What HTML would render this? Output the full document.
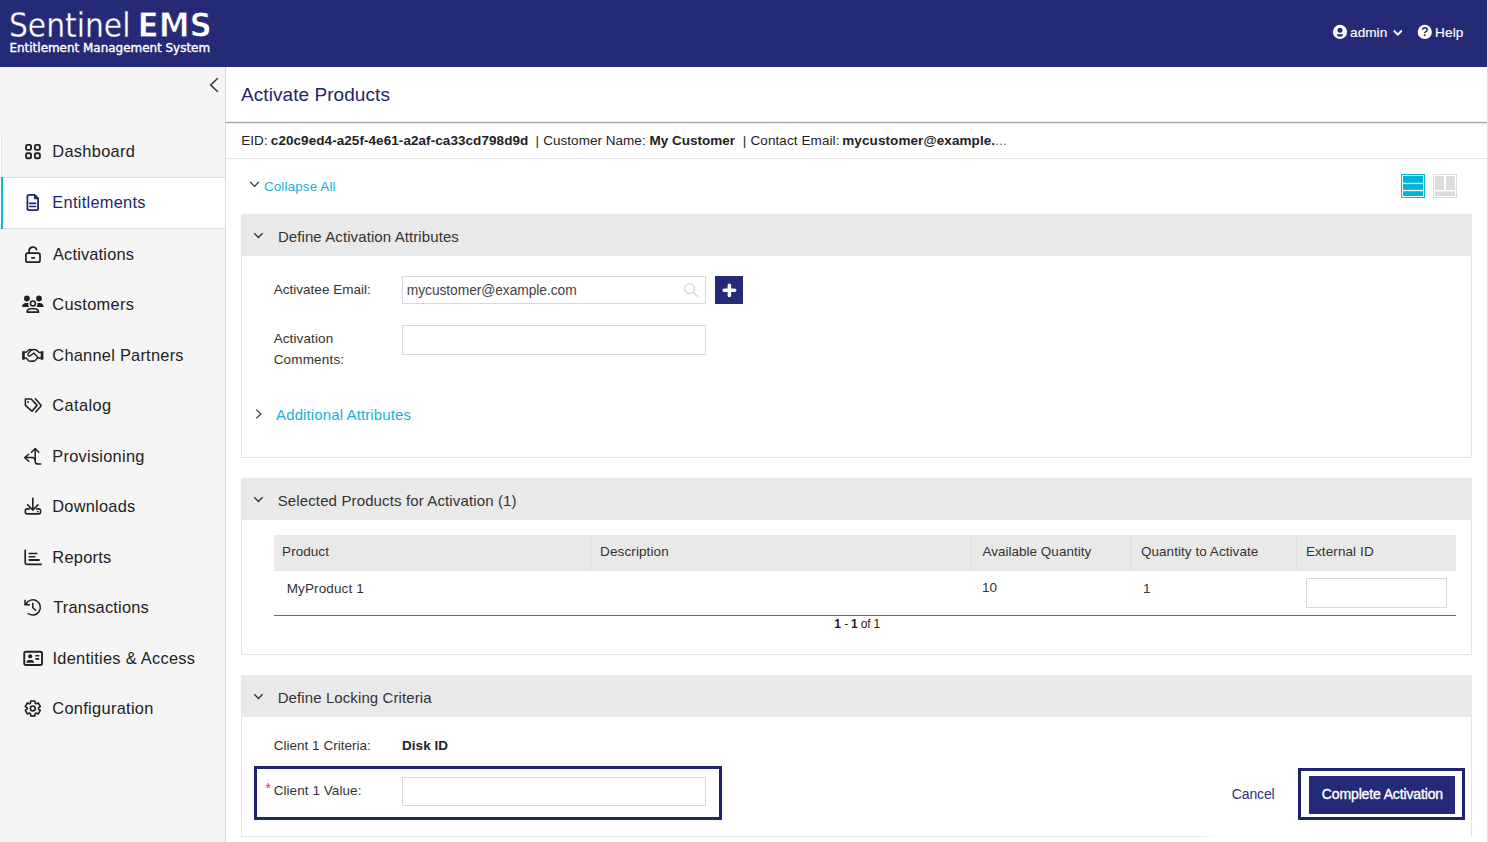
<!DOCTYPE html>
<html lang="en">
<head>
<meta charset="utf-8">
<title>Sentinel EMS - Activate Products</title>
<style>
*{box-sizing:border-box;margin:0;padding:0}
html,body{width:1488px;height:842px;overflow:hidden;background:#fff}
body{font-family:"Liberation Sans",Arial,sans-serif;color:#333;position:relative;font-size:13.5px}
.abs{position:absolute}
.t{position:absolute;white-space:nowrap;line-height:1}
#hdr{left:0;top:0;width:1487px;height:67px;background:#242a75}
#rline{left:1487px;top:0;width:1px;height:842px;background:#e3e3e3}
#side{left:0;top:67px;width:226px;height:775px;background:#f5f5f5;border-right:1px solid #d9d9d9}
.ph{position:absolute;left:241px;width:1231px;background:#e9e9e9}
.pb{position:absolute;left:241px;width:1231px;border:1px solid #e4e4e4;border-top:none;background:#fff}
.inp{position:absolute;border:1px solid #d8d8d8;background:#fff}
</style>
</head>
<body>
<!-- header -->
<div id="hdr" class="abs">
  <svg class="abs" style="left:0;top:0" width="230" height="67">
    <text x="8.9" y="36.6" fill="#fff" font-family="DejaVu Sans Condensed, Liberation Sans, sans-serif" font-size="33.2" textLength="121.6" lengthAdjust="spacingAndGlyphs" stroke="#242a75" stroke-width="0.3">Sentinel</text>
    <text x="137.4" y="36.600" fill="#fff" font-family="DejaVu Sans Condensed, Liberation Sans, sans-serif" font-weight="bold" font-size="33.8" textLength="74.6" lengthAdjust="spacingAndGlyphs" stroke="#242a75" stroke-width="0.9">EMS</text>
    <text x="9.5" y="52.4" fill="#fff" font-family="DejaVu Sans Condensed, Liberation Sans, sans-serif" font-size="12.2" textLength="200.6" lengthAdjust="spacingAndGlyphs" stroke="#fff" stroke-width="0.35">Entitlement Management System</text>
  </svg>
  <svg class="abs" style="left:1332px;top:24px" width="16" height="16" viewBox="0 0 16 16"><circle cx="8" cy="7.900" r="7.100" fill="#fff"/><circle cx="7.950" cy="6.350" r="2.500" fill="#242a75"/><path d="M4.700 10.200h6.500c0 1.400-1.400 2.500-3.250 2.500s-3.250-1.100-3.250-2.500z" fill="#242a75"/></svg>
  <svg class="abs" style="left:1392px;top:28px" width="12" height="9" viewBox="0 0 12 9"><path d="M1.800 2.500l4 4.100 4-4.100" fill="none" stroke="#fff" stroke-width="1.800"/></svg>
  <svg class="abs" style="left:1417px;top:24px" width="16" height="16" viewBox="0 0 16 16"><circle cx="7.800" cy="7.900" r="7.100" fill="#fff"/><text x="7.800" y="12.300" text-anchor="middle" font-family="Liberation Sans, sans-serif" font-weight="bold" font-size="12" fill="#242a75">?</text></svg>
</div>
<div id="rline" class="abs"></div>

<!-- sidebar -->
<div id="side" class="abs">
  <svg class="abs" style="left:208px;top:9px" width="12" height="18" viewBox="0 0 12 18"><path d="M9.800 2.200L2.700 9l7.100 6.800" fill="none" stroke="#333" stroke-width="1.500"/></svg>
</div>
<div class="abs" style="left:0;top:133px;width:1px;height:96px;background:#fff"></div>
<div class="abs" style="left:1px;top:133px;width:1px;height:44px;background:#e4e4e4"></div>
<div class="abs" style="left:0;top:177px;width:225px;height:52px;background:#fff;border-top:1px solid #dedede;border-bottom:1px solid #dedede"></div>
<div class="abs" style="left:1px;top:177px;width:2px;height:52px;background:#19b4d9"></div>
<svg class="abs" style="left:15px;top:132px" width="40" height="40" viewBox="0 0 40 40"><g fill="none" stroke="#222" stroke-width="1.9"><rect x="11.05" y="12.85" width="5" height="5" rx="1.4"/><rect x="19.9" y="12.85" width="5" height="5" rx="1.4"/><rect x="11.05" y="21.3" width="5" height="5" rx="1.4"/><rect x="19.9" y="21.3" width="5" height="5" rx="1.4"/></g></svg>
<svg class="abs" style="left:15px;top:183px" width="40" height="40" viewBox="0 0 40 40"><g fill="none" stroke="#1f2470" stroke-width="1.8" stroke-linejoin="round"><path d="M14 11.900h5.700l3.400 3.500v10.100a1.600 1.600 0 0 1-1.600 1.600h-7.500a1.600 1.600 0 0 1-1.600-1.600v-12a1.600 1.600 0 0 1 1.600-1.600z"/><path d="M19.400 11.900v3.900h3.700z" fill="#1f2470" stroke-width="1"/><path d="M14.700 20.400h6M14.700 23.500h6" stroke-width="1.600" stroke-linecap="round"/></g></svg>
<svg class="abs" style="left:15px;top:235px" width="40" height="40" viewBox="0 0 40 40"><g fill="none" stroke="#222" stroke-width="1.7" stroke-linecap="round"><rect x="10.900" y="18.200" width="14.100" height="9" rx="1.800"/><path d="M14.100 18v-2.200a3.800 3.800 0 0 1 7.400-1.200"/><path d="M16.900 22.800h2.400" stroke-width="1.800"/></g></svg>
<svg class="abs" style="left:15px;top:285px" width="40" height="40" viewBox="0 0 40 40"><g fill="#222" stroke="none"><circle cx="11.900" cy="13.500" r="2.900"/><circle cx="24" cy="13.500" r="2.900"/><path d="M7.100 21.900c0-2.400 1.600-4 4-4h2.300c-.5 1.900 0 3 1 4z"/><path d="M28.600 21.900c0-2.400-1.600-4-4-4h-2.300c.5 1.900 0 3-1 4z"/></g><g fill="none" stroke="#222" stroke-width="1.600"><circle cx="17.900" cy="18.500" r="2.500"/><path d="M12 27.100c.2-2 1.800-3.400 4-3.400h3.600c2.200 0 3.800 1.400 4 3.400z" stroke-linejoin="round"/></g></svg>
<svg class="abs" style="left:15px;top:335px" width="40" height="40" viewBox="0 0 40 40"><g fill="#222" stroke="none"><rect x="7.100" y="16.200" width="2.700" height="8.500"/><rect x="25.700" y="16.200" width="2.700" height="8.500"/></g><g fill="none" stroke="#222" stroke-width="1.500" stroke-linejoin="round" stroke-linecap="round"><path d="M9.800 17.200h1.400l2.600-2.200 2.400-.6"/><path d="M25.700 17.500h-1.600l-2.900-2.600-2.600-.5-2.800 1.100-2.700 3.400c-.4.700-.1 1.500.6 1.900.8.400 1.700.1 2.400-.5l2.700-2.300 4.200 4.400"/><path d="M23 22.900h2.700"/><path d="M9.800 22.900h1.300l2.900 3 1.800.4 1.500-.3 1.500.3 1.900-1.300 1.800-2"/></g></svg>
<svg class="abs" style="left:15px;top:385px" width="40" height="40" viewBox="0 0 40 40"><g fill="none" stroke="#222" stroke-width="1.600" stroke-linejoin="round" stroke-linecap="round"><path d="M10.400 14h5.800l5.900 6.400-5.100 5.700-6.600-5.700z"/><path d="M20.400 13.800l5.400 6.300c.3.400.3.800 0 1.200l-5.100 5.700"/></g><circle cx="13.100" cy="16.900" r="0.950" fill="#222"/></svg>
<svg class="abs" style="left:15px;top:436px" width="40" height="40" viewBox="0 0 40 40"><g fill="none" stroke="#222" stroke-width="1.500" stroke-linecap="round" stroke-linejoin="round"><path d="M16.500 16.300l3.700-3.700 3.600 3.700"/><path d="M20.200 12.800v12.400c0 1.800 1 2.900 2.800 2.900h2.800"/><path d="M13.700 18.300l-3.900 3.300 3.900 3.600"/><path d="M9.900 21.600h7c1.900 0 3.300 1 3.300 2.900"/></g></svg>
<svg class="abs" style="left:15px;top:486px" width="40" height="40" viewBox="0 0 40 40"><g fill="none" stroke="#222" stroke-width="1.600" stroke-linecap="round" stroke-linejoin="round"><path d="M17.800 12.300v11.600"/><path d="M12.700 18.900l5.100 5.100 5.100-5.100"/><path d="M14.300 22.900h-2.200a1.800 1.800 0 0 0-1.800 1.800v1.400a1.800 1.800 0 0 0 1.800 1.800h11.700a1.800 1.800 0 0 0 1.800-1.800v-1.400a1.800 1.800 0 0 0-1.800-1.800h-2.300"/></g><circle cx="22.800" cy="25.600" r="0.850" fill="#222"/></svg>
<svg class="abs" style="left:15px;top:537px" width="40" height="40" viewBox="0 0 40 40"><g fill="none" stroke="#222" stroke-width="1.700" stroke-linecap="round" stroke-linejoin="round"><path d="M10.200 13.300v12.500c0 1 .5 1.500 1.500 1.500h14.500"/><path d="M14.300 16.500h7.500M14.300 19.750h5.400"/><path d="M14.300 23h9.600" stroke-width="1.900"/></g></svg>
<svg class="abs" style="left:15px;top:587px" width="40" height="40" viewBox="0 0 40 40"><g fill="none" stroke="#222" stroke-width="1.500" stroke-linecap="round" stroke-linejoin="round"><path d="M11 16.900a7.600 7.600 0 1 1 2.100 9.600"/><path d="M17.800 16.300v4.500l2.900 2.500"/></g><path d="M9.250 12.800h1.500v4.300h4.100v1.500h-5.600z" fill="#222"/><path d="M10.200 17.600l2.200-2.300" stroke="#222" stroke-width="1.500"/></svg>
<svg class="abs" style="left:15px;top:638px" width="40" height="40" viewBox="0 0 40 40"><g fill="none" stroke="#222" stroke-width="1.900"><rect x="9.250" y="13.750" width="17.800" height="13.300" rx="1.800"/><path d="M20.300 17.700h4M20.300 20.900h4" stroke-width="1.600"/></g><g fill="#222"><circle cx="15.200" cy="18.300" r="2.100"/><path d="M11.300 24.700c0-1.600 1.200-2.700 2.800-2.700h2.200c1.600 0 2.800 1.100 2.800 2.700z"/></g></svg>
<svg class="abs" style="left:15px;top:688px" width="40" height="40" viewBox="0 0 40 40"><g fill="none" stroke="#222" stroke-width="1.600" stroke-linejoin="round"><path d="M15.48 15.24 L15.72 12.99 L19.88 12.99 L20.12 15.24 L21.15 15.84 L23.22 14.91 L25.31 18.52 L23.47 19.85 L23.47 21.05 L25.31 22.38 L23.22 25.99 L21.15 25.06 L20.12 25.66 L19.88 27.91 L15.72 27.91 L15.48 25.66 L14.45 25.06 L12.38 25.99 L10.29 22.38 L12.13 21.05 L12.13 19.85 L10.29 18.52 L12.38 14.91 L14.45 15.84Z"/><circle cx="17.800" cy="20.450" r="2.450"/></g></svg>

<!-- main -->
<div class="abs" style="left:226px;top:121px;width:1261px;height:3px;background:linear-gradient(180deg,#eceef1 0,#eceef1 1px,#a0a9b5 1px,#a0a9b5 2px,#e4e7eb 2px,#e4e7eb 3px)"></div>
<div class="abs" style="left:226px;top:158px;width:1261px;height:1px;background:#e6e6e6"></div>
<svg class="abs" style="left:248px;top:179px" width="14" height="10" viewBox="0 0 14 10"><path d="M2.200 3l4.300 4.500L10.800 3" fill="none" stroke="#3a3030" stroke-width="1.150"/></svg>

<!-- view toggles -->
<svg class="abs" style="left:1401px;top:174px" width="24" height="24" viewBox="0 0 24 24"><rect x="0.500" y="0.500" width="23" height="23" fill="#fff" stroke="#12b5da"/><rect x="2" y="2" width="20" height="6.800" fill="#00b4d8"/><rect x="2" y="10.100" width="20" height="5.700" fill="#00b4d8"/><rect x="2" y="17.200" width="20" height="4.800" fill="#00b4d8"/></svg>
<svg class="abs" style="left:1433px;top:174px" width="24" height="24" viewBox="0 0 24 24"><rect x="0.500" y="0.500" width="23" height="23" fill="#fff" stroke="#dcdcdc"/><rect x="2" y="2" width="9" height="14" fill="#dcdcdc"/><rect x="13" y="2" width="9" height="14" fill="#dcdcdc"/><rect x="2" y="17.500" width="20" height="4.500" fill="#dcdcdc"/></svg>

<!-- panel 1 -->
<div class="ph" style="top:214px;height:42px"></div>
<div class="pb" style="top:256px;height:202px"></div>
<svg class="abs" style="left:252px;top:230px" width="14" height="10" viewBox="0 0 14 10"><path d="M2.300 3.300l4.150 4.200 4.150-4.200" fill="none" stroke="#333" stroke-width="1.250"/></svg>
<div class="inp" style="left:402px;top:276px;width:304px;height:28px"></div>
<svg class="abs" style="left:683px;top:282px" width="16" height="16" viewBox="0 0 16 16"><circle cx="6.600" cy="6.600" r="4.800" fill="none" stroke="#dddad6" stroke-width="1.500"/><path d="M10.200 10.200l4.300 4.300" stroke="#dddad6" stroke-width="1.700"/></svg>
<div class="abs" style="left:715px;top:276px;width:28px;height:28px;background:#242a75"></div>
<svg class="abs" style="left:715px;top:276px" width="28" height="28" viewBox="0 0 28 28"><path d="M14.400 9.200V19.400M9.200 14.300H19.700" stroke="#fff" stroke-width="3.600" stroke-linecap="round"/></svg>
<div class="inp" style="left:402px;top:325px;width:304px;height:30px"></div>
<svg class="abs" style="left:253px;top:407px" width="12" height="14" viewBox="0 0 12 14"><path d="M3.300 2.600L7.900 7l-4.600 4.400" fill="none" stroke="#333" stroke-width="1.200"/></svg>

<!-- panel 2 -->
<div class="ph" style="top:478px;height:42px"></div>
<div class="pb" style="top:520px;height:135px"></div>
<svg class="abs" style="left:252px;top:494px" width="14" height="10" viewBox="0 0 14 10"><path d="M2.300 3.300l4.150 4.200 4.150-4.200" fill="none" stroke="#333" stroke-width="1.250"/></svg>
<div class="abs" style="left:274px;top:535px;width:1182px;height:35.500px;background:#e9e9e9"></div>
<div class="abs" style="left:590px;top:535px;width:1px;height:35px;background:#dcdcdc"></div>
<div class="abs" style="left:971px;top:535px;width:1px;height:35px;background:#dcdcdc"></div>
<div class="abs" style="left:1130px;top:535px;width:1px;height:35px;background:#dcdcdc"></div>
<div class="abs" style="left:1296px;top:535px;width:1px;height:35px;background:#dcdcdc"></div>
<div class="inp" style="left:1306px;top:578px;width:141px;height:30px"></div>
<div class="abs" style="left:274px;top:615px;width:1182px;height:1.300px;background:#6a6a6a"></div>

<!-- panel 3 -->
<div class="ph" style="top:675px;height:42px"></div>
<div class="pb" style="top:717px;height:120px"></div>
<svg class="abs" style="left:252px;top:691px" width="14" height="10" viewBox="0 0 14 10"><path d="M2.300 3.300l4.150 4.200 4.150-4.200" fill="none" stroke="#333" stroke-width="1.250"/></svg>
<div class="abs" style="left:254px;top:766px;width:467.500px;height:54px;border:3px solid #1f2470"></div>
<div class="inp" style="left:402px;top:777px;width:304px;height:28.500px"></div>

<!-- footer actions -->
<div class="abs" style="left:1190px;top:760px;width:281px;height:82px;background:linear-gradient(90deg,rgba(255,255,255,0),#fff 30px)"></div>
<div class="abs" style="left:1298px;top:768px;width:167px;height:52px;border:3px solid #1f2470;background:#fff"></div>
<div class="abs" style="left:1309px;top:776px;width:146px;height:38px;background:#242a75"></div>

<div class="t" id="n0" style="left:52.31px;top:143.12px;font-size:16.4px;letter-spacing:0.293px;color:#222">Dashboard</div>
<div class="t" id="n1" style="left:52.31px;top:194.12px;font-size:16.4px;letter-spacing:0.278px;color:#1f2470">Entitlements</div>
<div class="t" id="n2" style="left:53.00px;top:246.12px;font-size:16.4px;letter-spacing:0.162px;color:#222">Activations</div>
<div class="t" id="n3" style="left:52.31px;top:296.12px;font-size:16.4px;letter-spacing:0.293px;color:#222">Customers</div>
<div class="t" id="n4" style="left:52.31px;top:347.12px;font-size:16.4px;letter-spacing:0.246px;color:#222">Channel Partners</div>
<div class="t" id="n5" style="left:52.31px;top:397.12px;font-size:16.4px;letter-spacing:0.405px;color:#222">Catalog</div>
<div class="t" id="n6" style="left:52.31px;top:448.12px;font-size:16.4px;letter-spacing:0.253px;color:#222">Provisioning</div>
<div class="t" id="n7" style="left:52.31px;top:498.12px;font-size:16.4px;letter-spacing:0.226px;color:#222">Downloads</div>
<div class="t" id="n8" style="left:52.31px;top:549.12px;font-size:16.4px;letter-spacing:0.255px;color:#222">Reports</div>
<div class="t" id="n9" style="left:53.24px;top:599.12px;font-size:16.4px;letter-spacing:0.213px;color:#222">Transactions</div>
<div class="t" id="n10" style="left:52.52px;top:650.12px;font-size:16.4px;letter-spacing:0.270px;color:#222">Identities &amp; Access</div>
<div class="t" id="n11" style="left:52.31px;top:700.12px;font-size:16.4px;letter-spacing:0.300px;color:#222">Configuration</div>
<div class="t" id="h_admin" style="left:1350.06px;top:26.49px;font-size:13.6px;letter-spacing:0.035px;color:#fff;-webkit-text-stroke:0.15px #fff">admin</div>
<div class="t" id="h_help" style="left:1435.06px;top:26.49px;font-size:13.6px;letter-spacing:0.120px;color:#fff;-webkit-text-stroke:0.15px #fff">Help</div>
<div class="t" id="title" style="left:241.00px;top:84.92px;font-size:19px;letter-spacing:0.067px;color:#1f2470">Activate Products</div>
<div class="t" id="i1" style="left:241.30px;top:133.57px;font-size:13.5px;letter-spacing:0.030px;color:#222">EID:</div>
<div class="t" id="i2" style="left:270.84px;top:133.57px;font-size:13.5px;letter-spacing:0.065px;color:#222;font-weight:bold">c20c9ed4-a25f-4e61-a2af-ca33cd798d9d</div>
<div class="t" id="i3" style="left:535.52px;top:133.57px;font-size:13.5px;letter-spacing:0.000px;color:#222">|</div>
<div class="t" id="i4" style="left:543.26px;top:133.57px;font-size:13.5px;letter-spacing:0.027px;color:#222">Customer Name:</div>
<div class="t" id="i5" style="left:649.52px;top:133.57px;font-size:13.5px;letter-spacing:0.009px;color:#222;font-weight:bold">My Customer</div>
<div class="t" id="i6" style="left:742.73px;top:133.57px;font-size:13.5px;letter-spacing:0.000px;color:#222">|</div>
<div class="t" id="i7" style="left:750.47px;top:133.57px;font-size:13.5px;letter-spacing:0.090px;color:#222">Contact Email:</div>
<div class="t" id="i8" style="left:842.26px;top:133.57px;font-size:13.5px;letter-spacing:0.090px;color:#222;font-weight:bold">mycustomer@example.</div>
<div class="t" id="i9" style="left:995.15px;top:133.57px;font-size:13.5px;letter-spacing:0.000px;color:#666">...</div>
<div class="t" id="coll" style="left:263.89px;top:179.57px;font-size:13.5px;letter-spacing:0.106px;color:#1ab0db">Collapse All</div>
<div class="t" id="p1t" style="left:277.89px;top:229.30px;font-size:15px;letter-spacing:0.094px;color:#333">Define Activation Attributes</div>
<div class="t" id="l_ae" style="left:273.63px;top:282.57px;font-size:13.5px;letter-spacing:0.030px;color:#333">Activatee Email:</div>
<div class="t" id="v_ae" style="left:406.80px;top:284.32px;font-size:13.8px;letter-spacing:-0.064px;color:#444">mycustomer@example.com</div>
<div class="t" id="l_ac1" style="left:273.63px;top:331.57px;font-size:13.5px;letter-spacing:0.110px;color:#333">Activation</div>
<div class="t" id="l_ac2" style="left:273.63px;top:352.57px;font-size:13.5px;letter-spacing:0.181px;color:#333">Comments:</div>
<div class="t" id="addl" style="left:276.10px;top:407.30px;font-size:15px;letter-spacing:0.112px;color:#1ab0db">Additional Attributes</div>
<div class="t" id="p2t" style="left:277.68px;top:493.30px;font-size:15px;letter-spacing:0.131px;color:#333">Selected Products for Activation (1)</div>
<div class="t" id="th1" style="left:282.10px;top:544.57px;font-size:13.5px;letter-spacing:0.045px;color:#333">Product</div>
<div class="t" id="th2" style="left:600.10px;top:544.57px;font-size:13.5px;letter-spacing:0.108px;color:#333">Description</div>
<div class="t" id="th3" style="left:982.58px;top:544.57px;font-size:13.5px;letter-spacing:0.000px;color:#333">Available Quantity</div>
<div class="t" id="th4" style="left:1140.89px;top:544.57px;font-size:13.5px;letter-spacing:0.057px;color:#333">Quantity to Activate</div>
<div class="t" id="th5" style="left:1305.89px;top:544.57px;font-size:13.5px;letter-spacing:0.099px;color:#333">External ID</div>
<div class="t" id="td1" style="left:286.73px;top:581.57px;font-size:13.5px;letter-spacing:0.117px;color:#333">MyProduct 1</div>
<div class="t" id="td2" style="left:981.89px;top:580.57px;font-size:13.5px;letter-spacing:0.000px;color:#333">10</div>
<div class="t" id="td3" style="left:1142.94px;top:581.57px;font-size:13.5px;letter-spacing:0.000px;color:#333">1</div>
<div class="t" id="pg1" style="left:834.21px;top:617.84px;font-size:12px;letter-spacing:0.000px;color:#222;font-weight:bold">1</div>
<div class="t" id="pg2" style="left:844.21px;top:617.84px;font-size:12px;letter-spacing:0.000px;color:#222">-</div>
<div class="t" id="pg3" style="left:851.05px;top:617.84px;font-size:12px;letter-spacing:0.000px;color:#222;font-weight:bold">1</div>
<div class="t" id="pg4" style="left:860.79px;top:617.84px;font-size:12px;letter-spacing:-0.200px;color:#222">of 1</div>
<div class="t" id="p3t" style="left:277.68px;top:690.30px;font-size:15px;letter-spacing:0.099px;color:#333">Define Locking Criteria</div>
<div class="t" id="l_c1" style="left:273.63px;top:738.57px;font-size:13.5px;letter-spacing:0.026px;color:#333">Client 1 Criteria:</div>
<div class="t" id="v_c1" style="left:402.05px;top:738.57px;font-size:13.5px;letter-spacing:0.030px;color:#222;font-weight:bold">Disk ID</div>
<div class="t" id="ast" style="left:265.48px;top:781.15px;font-size:14px;letter-spacing:0.000px;color:#e2323c">*</div>
<div class="t" id="l_c2" style="left:273.63px;top:783.57px;font-size:13.5px;letter-spacing:0.071px;color:#333">Client 1 Value:</div>
<div class="t" id="cancel" style="left:1231.84px;top:787.15px;font-size:14px;letter-spacing:-0.144px;color:#2c3280">Cancel</div>
<div class="t" id="compl" style="left:1321.84px;top:787.15px;font-size:14px;letter-spacing:-0.135px;color:#fff;-webkit-text-stroke:0.35px #fff">Complete Activation</div>
</body>
</html>
